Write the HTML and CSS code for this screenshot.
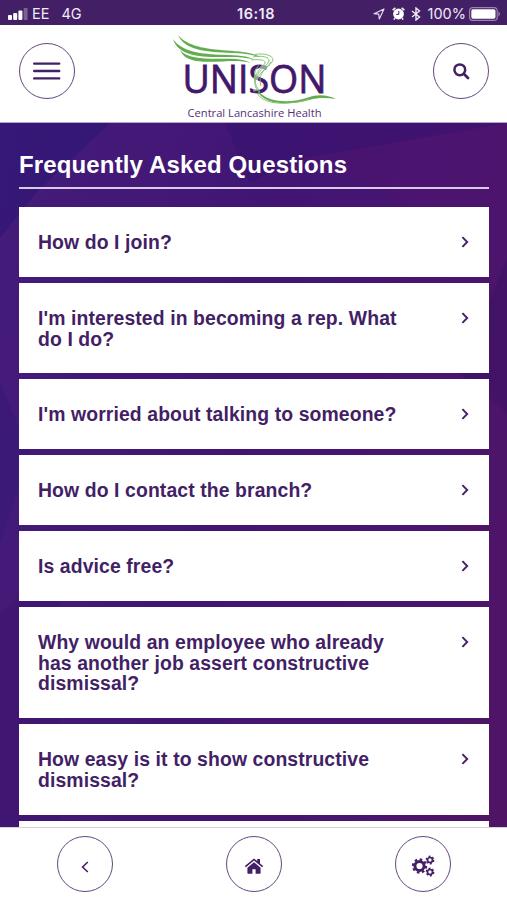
FILE: index.html
```html
<!DOCTYPE html>
<html lang="en">
<head>
<meta charset="UTF-8">
<meta name="viewport" content="width=device-width, initial-scale=1.0">
<title>Frequently Asked Questions</title>
<link rel="stylesheet" href="styles.css">
</head>
<body>

<!-- Status bar -->
<div class="status-bar">
  <div class="status-left">
    <svg class="signal" width="20" height="12" viewBox="0 0 20 12">
      <rect x="0" y="7" width="4" height="5" rx="1"/>
      <rect x="5.2" y="5" width="4" height="7" rx="1"/>
      <rect x="10.4" y="2.5" width="4" height="9.5" rx="1"/>
      <rect x="15.6" y="0" width="4" height="12" rx="1" opacity="0.3"/>
    </svg>
    <span class="carrier">EE</span>
    <span class="network">4G</span>
  </div>
  <div class="status-time">16:18</div>
  <div class="status-right">
    <svg width="12" height="12" viewBox="0 0 12 12"><path d="M11 1 1 5.7 5.8 6.2 6.3 11Z" fill="none" stroke="#e6dcef" stroke-width="1.2" stroke-linejoin="round"/></svg>
    <svg class="alarm" width="13" height="13" viewBox="0 0 13 13">
      <circle cx="6.5" cy="7" r="5.4"/>
      <path d="M.6 3.2 3.4.8M12.4 3.2 9.6.8M3 11.2 1.8 12.6M10 11.2l1.2 1.4" stroke="#f1eaf7" stroke-width="1.6"/>
      <path d="M6.8 4v3.4H4.2" fill="none" stroke="#431f66" stroke-width="1"/>
    </svg>
    <svg class="bluetooth" width="10" height="14" viewBox="0 0 10 14"><path d="M1 4l7.5 6L5 13V1l3.5 3L1 10" fill="none" stroke="#f1eaf7" stroke-width="1.4"/></svg>
    <span class="battery-text">100%</span>
    <svg class="battery" width="32" height="14" viewBox="0 0 32 14">
      <rect x=".6" y=".6" width="27.6" height="12.8" rx="3.2" fill="none" stroke="#9a84ae" stroke-width="1.2"/>
      <rect x="2.3" y="2.3" width="24.2" height="9.4" rx="1.6"/>
      <path d="M29.5 4.6c1.8.7 1.8 4.1 0 4.8z" opacity=".5"/>
    </svg>
  </div>
</div>

<!-- Header -->
<header class="header">
  <a class="circle-button" href="#" aria-label="Menu">
    <svg width="28" height="20" viewBox="0 0 28 20"><path d="M1.2 2.6h25M1.2 10h25M1.2 17.4h25" stroke="#431f66" stroke-width="2.4" stroke-linecap="round"/></svg>
  </a>
  <svg class="logo" width="170" height="97" viewBox="0 0 170 97">
    <text class="logo-name" x="13.5" y="68" textLength="144" lengthAdjust="spacingAndGlyphs">UNISON</text>
    <g class="logo-flow">
      <path d="M9 10C18 21 36 24 58 25.5c14 1 26 2 34 7-10-3.5-21-4.500-34-4.800C34 27 15 24 9 10Z"/>
      <path d="M4 14C13 27 32 29 54 29.800c14 .4 25 1 32 5.200-9-2.800-19-3-32-2.900C28 32.300 9 30 4 14Z"/>
      <path d="M11 25C19 34 36 34 54 33.800c13 0 21 .4 28 4.200-8-2.300-17-2-28-1.600C34 37.300 16 38 11 25Z"/>
    </g>
    <path class="logo-gap" d="M98 38C91 46 83 52 87 66"/>
    <path class="logo-lines" d="M86 29.5C95 27.5 105 31 104 35C102 41 91 46 88 54M84 32C92 30 101 32 100 36C98 42 87 46 86 57M82 35c8-1 15 0 14 3C93 44 82 48 87 63M91 39C84 46 83 56 91 67M102 37C97 44 88 49 92 61"/>
    <path class="logo-flow" d="M87 62C94 78 121 79 139 72.5c10-3.5 19-2.5 28 1.5-10-1.5-18-1.5-27 1C118 81 91 80 87 62Z"/>
    <path class="logo-lines" d="M88 68C95 81 121 80 140 74"/>
    <text class="logo-branch" x="18.5" y="92" textLength="134" lengthAdjust="spacingAndGlyphs">Central Lancashire Health</text>
  </svg>
  <a class="circle-button" href="#" aria-label="Search">
    <svg width="18" height="18" viewBox="0 0 18 18"><circle cx="7.8" cy="7.8" r="5.4" fill="none" stroke="#431f66" stroke-width="2.5"/><path d="M12 12l4 4" stroke="#431f66" stroke-width="2.8" stroke-linecap="round"/></svg>
  </a>
</header>

<!-- Questions -->
<main class="content">
  <svg class="backdrop" viewBox="0 0 507 704" preserveAspectRatio="none" aria-hidden="true">
    <path d="M0 0H110L38 68 0 115Z" fill="#2c1674" opacity=".6"/>
    <path d="M225 0H507L300 36 250 60Z" fill="#32116e" opacity=".4"/>
    <path d="M300 35 507 0V150L390 70Z" fill="#551571" opacity=".25"/>
    <path d="M507 135 460 250 507 290Z" fill="#32105f" opacity=".35"/>
    <path d="M0 260 30 330 0 420Z" fill="#2c1674" opacity=".3"/>
    <path d="M0 490 60 440V704H0Z" fill="#3a1469" opacity=".35"/>
  </svg>
  <h1>Frequently Asked Questions</h1>
  <ul class="faq-list">
    <li class="faq-item"><span>How do I join?</span><svg class="chevron" viewBox="0 0 8 12"><path d="M1.4 1.2 6.2 6 1.4 10.8"/></svg></li>
    <li class="faq-item"><span>I'm interested in becoming a rep. What<br>do I do?</span><svg class="chevron" viewBox="0 0 8 12"><path d="M1.4 1.2 6.2 6 1.4 10.8"/></svg></li>
    <li class="faq-item"><span>I'm worried about talking to someone?</span><svg class="chevron" viewBox="0 0 8 12"><path d="M1.4 1.2 6.2 6 1.4 10.8"/></svg></li>
    <li class="faq-item"><span>How do I contact the branch?</span><svg class="chevron" viewBox="0 0 8 12"><path d="M1.4 1.2 6.2 6 1.4 10.8"/></svg></li>
    <li class="faq-item"><span>Is advice free?</span><svg class="chevron" viewBox="0 0 8 12"><path d="M1.4 1.2 6.2 6 1.4 10.8"/></svg></li>
    <li class="faq-item"><span>Why would an employee who already<br>has another job assert constructive<br>dismissal?</span><svg class="chevron" viewBox="0 0 8 12"><path d="M1.4 1.2 6.2 6 1.4 10.8"/></svg></li>
    <li class="faq-item"><span>How easy is it to show constructive<br>dismissal?</span><svg class="chevron" viewBox="0 0 8 12"><path d="M1.4 1.2 6.2 6 1.4 10.8"/></svg></li>
    <li class="faq-item"></li>
  </ul>
</main>

<!-- Bottom navigation -->
<nav class="bottom-nav">
  <a class="circle-button" href="#" aria-label="Back">
    <svg class="back" width="8" height="12" viewBox="0 0 8 12"><path d="M6.8 1 1.6 6 6.8 11" fill="none" stroke="#431f66" stroke-width="1.6"/></svg>
  </a>
  <a class="circle-button" href="#" aria-label="Home">
    <svg class="home" width="20" height="16" viewBox="0 0 20 16">
      <path d="M10 4.2 3.4 9.7V15a.8.8 0 0 0 .8.8h4.2v-4.6h3.2v4.6h4.2a.8.8 0 0 0 .8-.8V9.7Z"/>
      <path d="M10 .4 13.2 3V1H16v4.4L19.2 8.1 18.1 9.3 10 2.6 1.9 9.3.8 8.1Z"/>
    </svg>
  </a>
  <a class="circle-button" href="#" aria-label="Settings">
    <svg class="gears" width="24" height="22" viewBox="0 0 24 22">
      <circle cx="8.5" cy="11" r="4.6" stroke-width="3"/>
      <circle cx="8.5" cy="11" r="6.6" stroke-width="2.2" stroke-dasharray="2.59 2.59"/>
      <circle cx="19" cy="5" r="2.5" stroke-width="1.7"/>
      <circle cx="19" cy="5" r="3.7" stroke-width="1.4" stroke-dasharray="1.94 1.94"/>
      <circle cx="19" cy="17" r="2.5" stroke-width="1.7"/>
      <circle cx="19" cy="17" r="3.7" stroke-width="1.4" stroke-dasharray="1.94 1.94"/>
    </svg>
  </a>
</nav>

</body>
</html>
```

FILE: styles.css
```css
* {
    box-sizing: border-box;
}

body {
    font-family: "Liberation Sans", Arial, sans-serif;
    margin: 0;
    height: 100vh;
    display: flex;
    flex-direction: column;
    overflow: hidden;
    background-color: #fff;
    color: #431f66;
}

.status-bar {
    flex: none;
    height: 25px;
    display: grid;
    grid-template-columns: 1fr auto 1fr;
    align-items: center;
    padding: 2px 6px 0 8px;
    background-color: #431f66;
    color: #f1eaf7;
    fill: #fff;
    font-family: Inter, sans-serif;
    font-size: 14.5px;
}

.status-left, .status-right {
    display: flex;
    align-items: center;
}

.status-right {
    justify-content: flex-end;
}

.carrier {
    margin-left: 4px;
}

.network {
    margin-left: 12px;
}

.status-time {
    padding-left: 3px;
    font-weight: 600;
    letter-spacing: 0.5px;
}

.alarm {
    margin-left: 7px;
}

.bluetooth {
    margin-left: 6px;
}

.battery-text {
    margin-left: 7px;
}

.battery {
    margin-left: 3px;
}

.header {
    flex: none;
    height: 98px;
    display: flex;
    justify-content: space-between;
    align-items: flex-start;
    padding: 0 18px 0 19px;
    border-bottom: 1px solid #b9a5cc;
}

.header .circle-button {
    margin-top: 18px;
}

.circle-button {
    width: 56px;
    height: 56px;
    display: flex;
    justify-content: center;
    align-items: center;
    border: 1.5px solid #63477f;
    border-radius: 50%;
}

.logo-name {
    font-family: "Open Sans", "Noto Sans", sans-serif;
    font-size: 39px;
    font-weight: 500;
    fill: #43176b;
    stroke: #43176b;
    stroke-width: 0.8;
}

.logo-branch {
    font-family: "Open Sans", "Noto Sans", sans-serif;
    font-size: 11px;
    fill: #54307a;
}

.logo-flow {
    fill: #62ad4f;
}

.logo-gap {
    fill: none;
    stroke: #fff;
    stroke-width: 5;
    opacity: 0.5;
}

.logo-lines {
    fill: none;
    stroke: #7dbd6c;
    stroke-width: 0.9;
}

.content {
    flex: 1;
    min-height: 0;
    overflow: hidden;
    position: relative;
    padding: 0 18px 0 19px;
    background: linear-gradient(100deg, #441c7a 0%, #421573 45%, #49156f 75%, #501465 100%);
}

.backdrop {
    position: absolute;
    left: 0;
    top: 0;
    width: 100%;
    height: 100%;
}

h1 {
    position: relative;
    height: 66px;
    margin: 0 0 18.2px;
    padding-top: 28px;
    border-bottom: 2px solid #d9cbe9;
    color: #fff;
    font-size: 24px;
    letter-spacing: 0.14px;
    line-height: 28px;
}

.faq-list {
    position: relative;
    display: flex;
    flex-direction: column;
    gap: 6px;
    margin: 0;
    padding: 0;
    list-style: none;
}

.faq-item {
    flex: none;
    display: flex;
    justify-content: space-between;
    align-items: flex-start;
    min-height: 69.8px;
    padding: 25px 20px 24.1px 19px;
    background-color: #fff;
    font-size: 19.4px;
    font-weight: bold;
    letter-spacing: 0.1px;
    line-height: 20.7px;
}

.chevron {
    width: 8px;
    height: 12px;
    margin-top: 4px;
    fill: none;
    stroke: #431f66;
    stroke-width: 1.9;
}

.bottom-nav {
    flex: none;
    height: 73px;
    display: grid;
    grid-template-columns: repeat(3, 1fr);
    justify-items: center;
    padding-top: 8px;
    border-top: 1px solid #d5d2d8;
    background-color: #fff;
}

.back {
    margin-top: 5px;
}

.home {
    margin-top: 3px;
    fill: #431f66;
}

.gears {
    margin-top: 3px;
    fill: none;
    stroke: #431f66;
}
```
